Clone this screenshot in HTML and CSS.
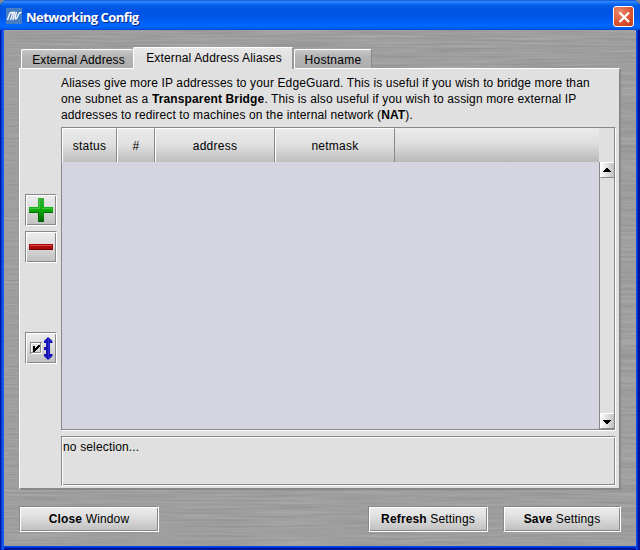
FILE: index.html
```html
<!DOCTYPE html>
<html lang="en">
<head>
<meta charset="utf-8">
<title>Networking Config</title>
<link rel="stylesheet" href="styles.css">
</head>
<body>
<div class="window">
  <header class="titlebar">
    <svg class="logo" width="16" height="16" viewBox="0 0 16 16"><rect width="16" height="16" fill="#477dc3"/><path d="M1.500 12L3.500 6Q4 4.500 5.500 4.500H7.500M4.500 12L6.800 4.500H8.500L6.800 12M10.500 4L9 10Q9 11.500 10.500 10.500L13 5.500Q13.500 4.500 15.500 4.500" fill="none" stroke="#fff" stroke-width="1.300"/></svg>
    <h1 class="title">Networking Config</h1>
    <button class="close" aria-label="Close"><svg width="21" height="21" viewBox="0 0 21 21"><path d="M5.500 5.500L15 15M15 5.500L5.500 15" stroke="#fff" stroke-width="2.200"/></svg></button>
  </header>
  <main class="client">
    <svg class="metal" width="632" height="516">
      <filter id="brushed" x="0" y="0" width="100%" height="100%" color-interpolation-filters="sRGB">
        <feTurbulence type="fractalNoise" baseFrequency="0.012 0.5" numOctaves="3" seed="4"/>
        <feColorMatrix values="0.12 0 0 0 0.56  0.12 0 0 0 0.56  0.12 0 0 0 0.56  0 0 0 0 1"/>
      </filter>
      <rect width="632" height="516" filter="url(#brushed)"/>
    </svg>
    <nav class="tabs">
      <div class="tab tab-address"><span>External Address</span></div>
      <div class="tab active"><span>External Address Aliases</span></div>
      <div class="tab tab-host"><span>Hostname</span></div>
    </nav>
    <section class="panel">
      <aside class="tools">
        <button class="tool" aria-label="Add"><svg width="28" height="28" viewBox="0 0 28 28"><defs><linearGradient id="g" x2="0" y2="1"><stop stop-color="#35ae35"/><stop offset=".45" stop-color="#10b210"/><stop offset="1" stop-color="#006300"/></linearGradient></defs><path d="M11 2H17V11H26V17H17V26H11V17H2V11H11Z" fill="url(#g)"/><path d="M11.500 26V16.500H2M17 16.500H26" fill="none" stroke="#006d00"/><path d="M12.500 3V12.500H3M15 12.500H25" fill="none" stroke="#42c642"/></svg></button>
        <button class="tool" aria-label="Remove"><svg width="28" height="28" viewBox="0 0 28 28"><path d="M2 11H26V17H2Z" fill="#a80909"/><path d="M3 12.500H25" stroke="#d84848"/><path d="M2 16.500H26" stroke="#780000"/></svg></button>
        <button class="tool tool-toggle" aria-label="Enable"><svg width="28" height="28" viewBox="0 0 28 28"><path d="M3.500 20V8.500H15" fill="none" stroke="#888"/><path d="M14.500 9V19.500H4" fill="none" stroke="#fff"/><path d="M4.500 19V9.500H14" fill="none" stroke="#fff"/><path d="M13.500 9V18.500H4" fill="none" stroke="#888"/><path d="M6 12H8V14H9V13H10V12H11V11H13V13H12V14H11V15H10V16H9V17H8V18H6Z" fill="#000"/><path d="M21 3L25.500 7V9H23V20H25.500V22L21 26L17 22V20H19V16H17V13H19V9H17V7Z" fill="#1616b4"/><path d="M21.500 5V24" stroke="#3030d0"/></svg></button>
      </aside>
      <div class="content">
        <p class="intro">Aliases give more IP addresses to your EdgeGuard. This is useful if you wish to bridge more than<br>one subnet as a <b>Transparent Bridge</b>. This is also useful if you wish to assign more external IP<br>addresses to redirect to machines on the internal network (<b>NAT</b>).</p>
        <div class="table">
          <div class="head">
            <div class="cols">
              <div class="col">status</div><div class="col">#</div><div class="col">address</div><div class="col">netmask</div>
            </div>
          </div>
          <div class="body">
            <div class="rows"></div>
            <div class="scroll">
              <div class="arrow"><svg width="14" height="14"><path d="M6 5H8V6H9V7H10V8H11V9H3V8H4V7H5V6H6Z"/></svg></div>
              <div class="arrow down"><svg width="14" height="14"><path d="M3 6H11V7H10V8H9V9H8V10H6V9H5V8H4V7H3Z"/></svg></div>
            </div>
          </div>
        </div>
        <div class="info">no selection...</div>
      </div>
    </section>
    <footer class="actions">
      <button class="btn btn-close"><b>Close</b> Window</button>
      <button class="btn btn-refresh"><b>Refresh</b> Settings</button>
      <button class="btn btn-save"><b>Save</b> Settings</button>
    </footer>
  </main>
</div>
</body>
</html>
```
FILE: styles.css
```css
* { box-sizing: border-box; }
body { margin: 0; background: #888; font: 12px/16px "Liberation Sans", Arial, sans-serif; color: #000; }
button { font: inherit; color: inherit; padding: 0; }
svg { display: block; }
.window { width: 640px; height: 550px; display: flex; flex-direction: column; border-radius: 7px 7px 0 0; overflow: hidden; background: linear-gradient(90deg, #0019a8 0 1px, #0734cf 1px 2px, #1458ec 2px 4px, transparent 4px 636px, #0a4fe8 636px 637px, #0030d0 637px 638px, #00139a 638px), linear-gradient(#0046e5 0 546px, #0046ef 546px 547px, #0030d0 547px 548px, #00129a 548px); }
.titlebar { flex: 0 0 30px; display: flex; align-items: center; padding: 3px 6px 0 6px; background: linear-gradient(#0854d8 0, #3b91ff 2px, #1672fa 3px, #025be7 6px, #0054e3 10px, #0057ea 18px, #0166ff 25px, #0164fa 27px, #004bd8 30px); }
.logo { margin-top: -2px; }
.title { margin: 0 auto 0 4px; font: bold 13px/18px "Open Sans", "Noto Sans", sans-serif; letter-spacing: -.52px; color: #fff; text-shadow: 1px 1px #0b2a91; }
.close { width: 21px; height: 21px; border: 1px solid #fff; border-radius: 3px; background: radial-gradient(circle at 30% 25%, #e88a6c, #dc5433 55%, #c03c17); display: grid; place-items: center; }
.client { position: relative; isolation: isolate; flex: 0 0 516px; width: 632px; margin-left: 4px; padding: 17px 15px 0 15px; background: #9b9b9b; overflow: hidden; }
.metal { position: absolute; inset: 0; z-index: -1; width: 632px; }
.tabs { display: flex; align-items: flex-end; height: 21px; padding-left: 2px; }
.tab { height: 19px; border: 1px solid #fff; border-bottom: 0; border-right-color: #888; border-radius: 2px 2px 0 0; background: linear-gradient(#c8c8c8, #b5b5b5 35%, #adadad); text-align: center; line-height: 20px; white-space: nowrap; }
.tab-address { width: 112px; letter-spacing: .12px; padding-left: 2px; border-right: 0; }
.tab.active { width: 161px; height: 22px; margin-bottom: -1px; padding-left: 2px; border-right: 2px solid #999; background: linear-gradient(#e9e9e9, #e0e0e0 50%); letter-spacing: .15px; line-height: 20px; position: relative; }
.tab-host { width: 78px; letter-spacing: .3px; }
.panel { display: flex; height: 422px; border: 1px solid #fff; border-right: 2px solid #888; border-bottom: 2px solid #888; background: #e0e0e0; }
.tools { width: 41px; padding: 125px 0 0 5px; }
.tool { display: block; width: 32px; height: 32px; margin-bottom: 5px; }
.tool-toggle { margin-top: 69px; }
.tool, .btn { border: 1px solid; border-color: #888 #fff #fff #888; box-shadow: inset 1px 1px #fff, inset -1px -1px #888; background: linear-gradient(#ededed, #dfdfdf 40%, #bfbfbf); }
.tool svg { margin: 1px; }
.content { width: 555px; padding-top: 6px; }
.intro { height: 52px; margin: 0; white-space: nowrap; letter-spacing: .135px; }
.table, .info { border: 1px solid; border-color: #888 #fff #fff #888; box-shadow: inset -1px -1px #888; }
.table { height: 304px; padding: 0 1px 1px 0; }
.head { height: 34px; width: 537px; background: linear-gradient(#ececec, #dedede 45%, #b8b8b8); }
.cols { display: grid; width: 333px; height: 34px; grid-template-columns: 55px 38px 120px 120px; }
.col { border: 1px solid #fff; border-right-color: #888; border-bottom-color: #888; background: linear-gradient(#eaeaea, #e0e0e0 45%, #bcbcbc); text-align: center; line-height: 34px; letter-spacing: .25px; }
.body { display: flex; height: 267px; }
.rows { flex: 0 0 537px; background: #d5d5e1; }
.scroll { flex: 1; min-width: 0; display: flex; flex-direction: column; justify-content: space-between; border-left: 1px solid #888; background: #e0e0e0; }
.arrow { height: 16px; border: 1px solid #fff; border-right: 0; border-bottom-color: #888; background: linear-gradient(90deg, #fff, #c0c0c0); overflow: hidden; }
.arrow svg { margin-left: -1px; }
.info { height: 50px; margin-top: 5px; padding: 2px 1px; box-shadow: inset 1px 1px #fff, inset -1px -1px #888; letter-spacing: .15px; }
.actions { display: flex; margin-top: 16px; }
.btn { height: 26px; letter-spacing: .15px; }
.btn-close { width: 140px; }
.btn-refresh { width: 120px; margin-left: auto; }
.btn-save { width: 118px; margin-left: 15px; }
```
